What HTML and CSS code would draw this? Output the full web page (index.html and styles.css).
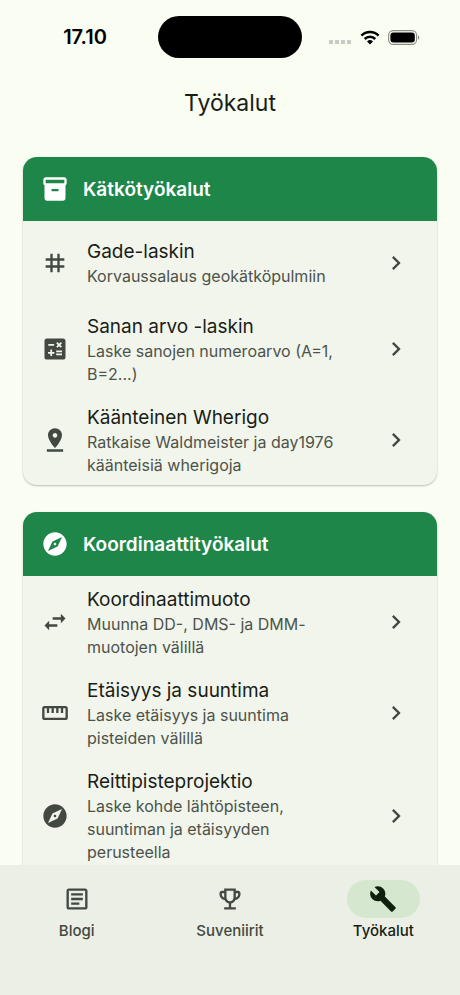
FILE: index.html
```html
<!DOCTYPE html>
<html lang="fi">
<head>
<meta charset="utf-8">
<meta name="viewport" content="width=device-width, initial-scale=1">
<title>Työkalut</title>
<link rel="stylesheet" href="styles.css">
</head>
<body>
<div class="status">
  <span class="status-time">17.10</span>
  <span class="island"></span>
  <span class="status-icons">
    <svg class="dots" viewBox="0 0 23 4" aria-hidden="true"><path d="M0 0h4v4H0zM6 0h4v4H6zM12 0h4v4h-4zM18 0h4v4h-4z"/></svg>
    <svg class="wifi" viewBox="0 0 20 15" aria-hidden="true"><path d="M1.4 5.6a12.2 12.2 0 0 1 17.2 0M4.7 9a7.5 7.5 0 0 1 10.6 0" fill="none" stroke="#000" stroke-width="2.5"/><path d="M10 14.6l-3-3.1a4.3 4.3 0 0 1 6 0z"/></svg>
    <svg class="battery" viewBox="0 0 32 15" aria-hidden="true"><rect x=".6" y=".6" width="28" height="13.8" rx="4.6" fill="none" stroke="#8b8e87" stroke-width="1.1"/><rect x="2.4" y="2.4" width="24.4" height="10.2" rx="3"/><path d="M30 5.2c1.7.8 1.7 3.8 0 4.6z" fill="#8b8e87"/></svg>
  </span>
</div>
<header class="appbar"><h1>Työkalut</h1></header>
<main class="content">
  <section class="card">
    <h2 class="card-head">
      <svg class="icon" viewBox="0 0 24 24" aria-hidden="true"><path d="M20 2H4c-1 0-2 .9-2 2v3.01c0 .72.43 1.34 1 1.69V20c0 1.1 1.1 2 2 2h14c.9 0 2-.9 2-2V8.7c.57-.35 1-.97 1-1.69V4c0-1.1-1-2-2-2zm-5 12H9v-2h6v2zm5-7H4V4h16v3z"/></svg>
      Kätkötyökalut
    </h2>
    <ul class="rows">
      <li><a class="row" href="#gade">
        <svg class="icon" viewBox="0 0 24 24" aria-hidden="true"><path d="M20 10V8h-4V4h-2v4h-4V4H8v4H4v2h4v4H4v2h4v4h2v-4h4v4h2v-4h4v-2h-4v-4h4zm-6 4h-4v-4h4v4z"/></svg>
        <span class="text"><span class="name">Gade-laskin</span><span class="desc">Korvaussalaus geokätköpulmiin</span></span>
        <svg class="icon" viewBox="0 0 24 24" aria-hidden="true"><path d="M10 6 8.59 7.41 13.17 12l-4.58 4.59L10 18l6-6z"/></svg>
      </a></li>
      <li><a class="row" href="#sana">
        <svg class="icon" viewBox="0 0 24 24" aria-hidden="true"><path d="M19 3H5c-1.1 0-2 .9-2 2v14c0 1.1.9 2 2 2h14c1.1 0 2-.9 2-2V5c0-1.1-.9-2-2-2zm-5.97 4.06L14.09 6l1.41 1.41L16.91 6l1.06 1.06-1.41 1.41 1.41 1.41-1.06 1.06-1.41-1.4-1.41 1.41-1.06-1.06 1.41-1.41-1.41-1.42zm-6.78.66h5v1.5h-5v-1.5zM11.5 16h-2v2H8v-2H6v-1.5h2v-2h1.5v2h2V16zm6.5 1.25h-5v-1.5h5v1.5zm0-2.5h-5v-1.5h5v1.5z"/></svg>
        <span class="text"><span class="name">Sanan arvo -laskin</span><span class="desc">Laske sanojen numeroarvo (A=1, B=2...)</span></span>
        <svg class="icon" viewBox="0 0 24 24" aria-hidden="true"><path d="M10 6 8.59 7.41 13.17 12l-4.58 4.59L10 18l6-6z"/></svg>
      </a></li>
      <li><a class="row" href="#wherigo">
        <svg class="icon" viewBox="0 0 24 24" aria-hidden="true"><path d="M18 8c0-3.31-2.69-6-6-6S6 4.69 6 8c0 4.5 6 11 6 11s6-6.5 6-11zm-8 0c0-1.1.9-2 2-2s2 .9 2 2-.89 2-2 2c-1.1 0-2-.9-2-2zM5 20v2h14v-2H5z"/></svg>
        <span class="text"><span class="name">Käänteinen Wherigo</span><span class="desc">Ratkaise Waldmeister ja day1976 käänteisiä wherigoja</span></span>
        <svg class="icon" viewBox="0 0 24 24" aria-hidden="true"><path d="M10 6 8.59 7.41 13.17 12l-4.58 4.59L10 18l6-6z"/></svg>
      </a></li>
    </ul>
  </section>
  <section class="card">
    <h2 class="card-head">
      <svg class="icon" viewBox="0 0 24 24" aria-hidden="true"><path d="M12 10.9c-.61 0-1.1.49-1.1 1.1s.49 1.1 1.1 1.1c.61 0 1.1-.49 1.1-1.1s-.49-1.1-1.1-1.1zM12 2C6.48 2 2 6.48 2 12s4.48 10 10 10 10-4.48 10-10S17.52 2 12 2zm2.19 12.19L6 18l3.81-8.19L18 6l-3.81 8.19z"/></svg>
      Koordinaattityökalut
    </h2>
    <ul class="rows">
      <li><a class="row" href="#muoto">
        <svg class="icon" viewBox="0 0 24 24" aria-hidden="true"><path d="M6.99 11 3 15l3.99 4v-3H14v-2H6.99v-3zM21 9l-3.99-4v3H10v2h7.01v3L21 9z"/></svg>
        <span class="text"><span class="name">Koordinaattimuoto</span><span class="desc">Muunna DD-, DMS- ja DMM-muotojen välillä</span></span>
        <svg class="icon" viewBox="0 0 24 24" aria-hidden="true"><path d="M10 6 8.59 7.41 13.17 12l-4.58 4.59L10 18l6-6z"/></svg>
      </a></li>
      <li><a class="row" href="#etaisyys">
        <svg class="icon" viewBox="0 0 24 24" aria-hidden="true"><path d="M21 6H3c-1.1 0-2 .9-2 2v8c0 1.1.9 2 2 2h18c1.1 0 2-.9 2-2V8c0-1.1-.9-2-2-2zm0 10H3V8h2v4h2V8h2v4h2V8h2v4h2V8h2v4h2V8h2v8z"/></svg>
        <span class="text"><span class="name">Etäisyys ja suuntima</span><span class="desc">Laske etäisyys ja suuntima pisteiden välillä</span></span>
        <svg class="icon" viewBox="0 0 24 24" aria-hidden="true"><path d="M10 6 8.59 7.41 13.17 12l-4.58 4.59L10 18l6-6z"/></svg>
      </a></li>
      <li><a class="row" href="#projektio">
        <svg class="icon" viewBox="0 0 24 24" aria-hidden="true"><path d="M12 10.9c-.61 0-1.1.49-1.1 1.1s.49 1.1 1.1 1.1c.61 0 1.1-.49 1.1-1.1s-.49-1.1-1.1-1.1zM12 2C6.48 2 2 6.48 2 12s4.48 10 10 10 10-4.48 10-10S17.52 2 12 2zm2.19 12.19L6 18l3.81-8.19L18 6l-3.81 8.19z"/></svg>
        <span class="text"><span class="name">Reittipisteprojektio</span><span class="desc">Laske kohde lähtöpisteen, suuntiman ja etäisyyden perusteella</span></span>
        <svg class="icon" viewBox="0 0 24 24" aria-hidden="true"><path d="M10 6 8.59 7.41 13.17 12l-4.58 4.59L10 18l6-6z"/></svg>
      </a></li>
    </ul>
  </section>
</main>
<nav class="tabs">
  <a class="tab" href="#blogi">
    <span class="pill"><svg class="icon" viewBox="0 0 24 24" aria-hidden="true"><path d="M19 5v14H5V5h14m0-2H5c-1.1 0-2 .9-2 2v14c0 1.1.9 2 2 2h14c1.1 0 2-.9 2-2V5c0-1.1-.9-2-2-2zM14 17H7v-2h7v2zm3-4H7v-2h10v2zm0-4H7V7h10v2z"/></svg></span>
    Blogi
  </a>
  <a class="tab" href="#suveniirit">
    <span class="pill"><svg class="icon" viewBox="0 0 24 24" aria-hidden="true"><path d="M19 5h-2V3H7v2H5c-1.1 0-2 .9-2 2v1c0 2.55 1.92 4.63 4.39 4.94.63 1.5 1.98 2.63 3.61 2.96V19H7v2h10v-2h-4v-3.1c1.63-.33 2.98-1.46 3.61-2.96C19.08 12.63 21 10.55 21 8V7c0-1.1-.9-2-2-2zM5 8V7h2v3.82C5.84 10.4 5 9.3 5 8zm7 6c-1.65 0-3-1.35-3-3V5h6v6c0 1.65-1.35 3-3 3zm7-6c0 1.3-.84 2.4-2 2.82V7h2v1z"/></svg></span>
    Suveniirit
  </a>
  <a class="tab active" href="#tyokalut" aria-current="page">
    <span class="pill"><svg class="icon" viewBox="0 0 24 24" aria-hidden="true"><path d="M22.7 19l-9.1-9.1c.9-2.3.4-5-1.5-6.9-2-2-5-2.4-7.4-1.3L9 6 6 9 1.6 4.7C.4 7.1.9 10.1 2.9 12.1c1.9 1.9 4.6 2.4 6.9 1.5l9.1 9.1c.4.4 1 .4 1.4 0l2.3-2.3c.5-.4.5-1.1.1-1.4z"/></svg></span>
    Työkalut
  </a>
</nav>
</body>
</html>
```
FILE: styles.css
```css
* {
  box-sizing: border-box;
}

body {
  margin: 0;
  height: 100vh;
  display: flex;
  flex-direction: column;
  background: #f9fdf2;
  color: #191d17;
  font-family: Inter, "Liberation Sans", sans-serif;
}

a {
  color: inherit;
  text-decoration: none;
}

svg {
  display: block;
  flex: none;
}

.status {
  display: grid;
  grid-template-columns: 1fr auto 1fr;
  align-items: center;
  padding-top: 16px;
}

.status-time {
  padding-left: 12px;
  text-align: center;
  font-size: 20px;
  font-weight: 600;
  color: #000;
}

.island {
  width: 144px;
  height: 42px;
  border-radius: 21px;
  background: #000;
}

.status-icons {
  display: flex;
  justify-content: flex-end;
  align-items: center;
  gap: 8px;
  padding-right: 40px;
}

.dots {
  width: 23px;
  height: 4px;
  margin-top: 10px;
  fill: #c8cbc3;
}

.wifi {
  width: 20px;
  height: 15px;
}

.battery {
  width: 32px;
  height: 15px;
}

.appbar {
  display: flex;
  justify-content: center;
  padding: 29px 16px 15px;
}

.appbar h1 {
  margin: 0;
  font-size: 23px;
  line-height: 33px;
  font-weight: 400;
}

.content {
  flex: 1;
  min-height: 0;
  overflow-y: auto;
  scrollbar-width: none;
  display: flex;
  flex-direction: column;
  gap: 27px;
  padding: 22px 23px;
}

.card {
  flex: none;
  overflow: hidden;
  border-radius: 14px;
  background: #f2f5ec;
  box-shadow: 0 1px 2px rgba(0, 0, 0, 0.25);
}

.card:last-child {
  padding-bottom: 16px;
}

.card-head {
  display: flex;
  align-items: center;
  gap: 14px;
  height: 64px;
  margin: 0;
  padding: 0 18px;
  background: #1e8649;
  color: #fff;
  font-size: 19px;
  font-weight: 600;
}

.icon {
  width: 28px;
  height: 28px;
  fill: currentColor;
}

.rows {
  margin: 0;
  padding: 0;
  list-style: none;
}

.row {
  display: flex;
  align-items: center;
  gap: 18px;
  min-height: 82px;
  padding: 9px 27px 8px 18px;
  color: #424940;
}

.text {
  flex: 1;
  min-width: 0;
  padding: 2px 16px 0 0;
}

.name,
.desc {
  display: block;
}

.name {
  font-size: 19px;
  line-height: 26px;
  color: #191d17;
}

.desc {
  font-size: 16px;
  line-height: 23px;
  color: #4c534a;
}

.tabs {
  display: grid;
  grid-template-columns: repeat(3, 1fr);
  padding: 15px 0 55px;
  background: #ebefe6;
  color: #424940;
}

.tab {
  display: flex;
  flex-direction: column;
  align-items: center;
  gap: 4px;
  font-size: 15px;
  line-height: 18px;
  font-weight: 500;
}

.pill {
  display: flex;
  justify-content: center;
  width: 73px;
  padding: 5px 0;
  border-radius: 19px;
}

.active {
  color: #191d17;
}

.active .pill {
  background: #d5e8cf;
  color: #10200d;
}
```
